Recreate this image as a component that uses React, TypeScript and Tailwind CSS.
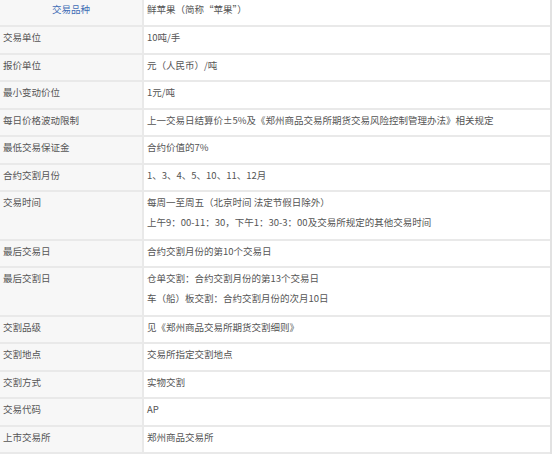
const rows: { k: string; v: string[]; tall?: boolean }[] = [
  { k: '交易单位', v: ['10吨/手'] },
  { k: '报价单位', v: ['元（人民币）/吨'] },
  { k: '最小变动价位', v: ['1元/吨'] },
  { k: '每日价格波动限制', v: ['上一交易日结算价±5%及《郑州商品交易所期货交易风险控制管理办法》相关规定'] },
  { k: '最低交易保证金', v: ['合约价值的7%'] },
  { k: '合约交割月份', v: ['1、3、4、5、10、11、12月'] },
  { k: '交易时间', v: ['每周一至周五（北京时间 法定节假日除外）', '上午9：00-11：30，下午1：30-3：00及交易所规定的其他交易时间'], tall: true },
  { k: '最后交易日', v: ['合约交割月份的第10个交易日'] },
  { k: '最后交割日', v: ['仓单交割：合约交割月份的第13个交易日', '车（船）板交割：合约交割月份的次月10日'], tall: true },
  { k: '交割品级', v: ['见《郑州商品交易所期货交割细则》'] },
  { k: '交割地点', v: ['交易所指定交割地点'] },
  { k: '交割方式', v: ['实物交割'] },
  { k: '交易代码', v: ['AP'] },
  { k: '上市交易所', v: ['郑州商品交易所'] },
];

export default function App() {
  return (
    <div className="w-[554px] h-[455px] bg-white text-[9.5px] text-[#555] font-['Noto_Sans_CJK_SC','Noto_Sans',sans-serif]">
      <div className="w-[552px] border-r-2 border-[#e2e2e2]">
        {/* header row */}
        <div className="flex h-[27px] border-b-2 border-[#e9e9e9]">
          <div className="w-[144px] shrink-0 bg-[#f7f7f7] border-r-2 border-[#e9e9e9] text-center text-[#3f6db5] leading-[18px]">
            交易品种
          </div>
          <div className="flex-1 pl-[3px] leading-[18px]">鲜苹果（简称“苹果”）</div>
        </div>

        {rows.map((r) => (
          <div
            key={r.k}
            className={`flex border-b-2 border-[#e9e9e9] ${r.tall ? 'h-[48.5px]' : 'h-[27.5px]'}`}
          >
            <div className="w-[144px] shrink-0 bg-[#f7f7f7] border-r-2 border-[#e9e9e9] pl-[3px] pt-[1px] leading-[19.5px]">
              {r.k}
            </div>
            <div className="flex-1 pl-[3px] pt-[1px] leading-[19.5px] whitespace-nowrap">
              {r.v.map((line) => (
                <div key={line}>{line}</div>
              ))}
            </div>
          </div>
        ))}
      </div>
    </div>
  );
}
